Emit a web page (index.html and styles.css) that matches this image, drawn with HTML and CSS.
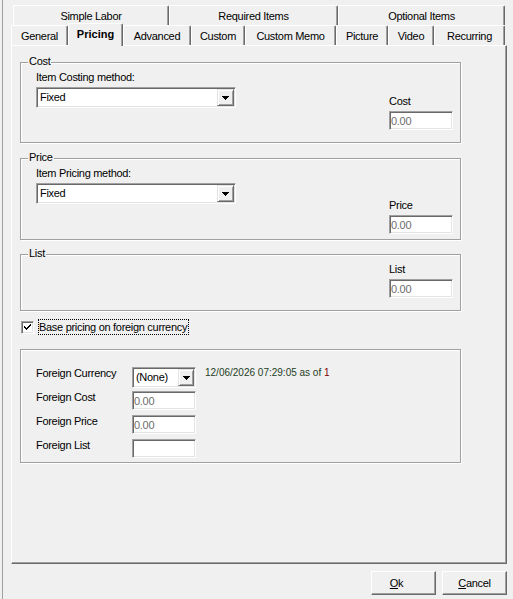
FILE: index.html
```html
<!DOCTYPE html>
<html lang="en">

<head>
    <meta charset="UTF-8">
    <meta name="viewport" content="width=device-width, initial-scale=1.0">
    <title>Item Pricing</title>
    <link rel="stylesheet" href="styles.css">
</head>

<body>
    <div class="window">
        <div class="tabs">
            <div class="tab-row back">
                <div class="tab t-labor">Simple Labor</div>
                <div class="tab t-required">Required Items</div>
                <div class="tab t-optional">Optional Items</div>
            </div>
            <div class="tab-row front">
                <div class="tab t-general">General</div>
                <div class="tab t-pricing active">Pricing</div>
                <div class="tab t-advanced">Advanced</div>
                <div class="tab t-custom">Custom</div>
                <div class="tab t-memo">Custom Memo</div>
                <div class="tab t-picture">Picture</div>
                <div class="tab t-video">Video</div>
                <div class="tab t-recurring">Recurring</div>
            </div>
        </div>

        <div class="panel">
            <div class="group cost">
                <span class="legend">Cost</span>
                <div class="cols">
                    <div class="method">
                        <label>Item Costing method:</label>
                        <div class="combo wide">
                            <span class="combo-text">Fixed</span>
                            <span class="drop"><svg width="7" height="4" viewBox="0 0 7 4"><path d="M0 0h7v1H0zM1 1h5v1H1zM2 2h3v1H2zM3 3h1v1H3z" fill="#000"/></svg></span>
                        </div>
                    </div>
                    <div class="side">
                        <label for="cost">Cost</label>
                        <input type="text" id="cost" class="field" value="0.00" readonly>
                    </div>
                </div>
            </div>

            <div class="group price">
                <span class="legend">Price</span>
                <div class="cols">
                    <div class="method">
                        <label>Item Pricing method:</label>
                        <div class="combo wide">
                            <span class="combo-text">Fixed</span>
                            <span class="drop"><svg width="7" height="4" viewBox="0 0 7 4"><path d="M0 0h7v1H0zM1 1h5v1H1zM2 2h3v1H2zM3 3h1v1H3z" fill="#000"/></svg></span>
                        </div>
                    </div>
                    <div class="side">
                        <label for="price">Price</label>
                        <input type="text" id="price" class="field" value="0.00" readonly>
                    </div>
                </div>
            </div>

            <div class="group list">
                <span class="legend">List</span>
                <div class="cols">
                    <div class="side">
                        <label for="list">List</label>
                        <input type="text" id="list" class="field" value="0.00" readonly>
                    </div>
                </div>
            </div>

            <div class="check-row">
                <span class="checkbox"><svg width="9" height="9" viewBox="0 0 9 9"><path d="M1 3h1v1h1v1h1V4h1V3h1V2h1V1h1v2H7v1H6v1H5v1H4v1H3V6H2V5H1z" fill="#000"/></svg></span>
                <span class="check-label">Base pricing on foreign currency</span>
            </div>

            <div class="group foreign">
                <div class="foreign-grid">
                    <span>Foreign Currency</span>
                    <div class="combo small">
                        <span class="combo-text">(None)</span>
                        <span class="drop"><svg width="7" height="4" viewBox="0 0 7 4"><path d="M0 0h7v1H0zM1 1h5v1H1zM2 2h3v1H2zM3 3h1v1H3z" fill="#000"/></svg></span>
                    </div>
                    <span class="rate">12/06/2026 07:29:05 as of <span class="rate-num">1</span></span>

                    <span>Foreign Cost</span>
                    <input type="text" class="field" value="0.00" readonly>
                    <span></span>

                    <span>Foreign Price</span>
                    <input type="text" class="field" value="0.00" readonly>
                    <span></span>

                    <span>Foreign List</span>
                    <input type="text" class="field" value="">
                    <span></span>
                </div>
            </div>
        </div>

        <div class="buttons">
            <button type="button" class="btn ok"><u>O</u>k</button>
            <button type="button" class="btn"><u>C</u>ancel</button>
        </div>
    </div>
</body>

</html>
```

FILE: styles.css
```css
* {
    box-sizing: border-box;
}

body {
    margin: 0;
    padding-left: 2px;
    background: #f0f0f0;
    font-family: "Liberation Sans", Arial, sans-serif;
    font-size: 11px;
    line-height: 13px;
    letter-spacing: -0.3px;
    color: #000;
    overflow: hidden;
}

.window {
    width: 511px;
    height: 599px;
    border-left: 1px solid #a0a0a0;
}

/* tabs */
.tabs {
    margin-left: 8px;
    padding-top: 5px;
}

.tab-row {
    display: flex;
    height: 20px;
}

.back {
    padding-left: 2px;
}

.tab {
    height: 20px;
    padding-top: 4px;
    border-top: 1px solid #fff;
    border-left: 1px solid #fff;
    border-right: 1px solid #696969;
    box-shadow: inset -1px 0 #a0a0a0;
    border-radius: 2px 2px 0 0;
    text-align: center;
    white-space: nowrap;
}

.t-labor { width: 156px; }
.t-required { width: 169px; }
.t-optional { width: 167px; }
.t-general { width: 57px; }
.t-pricing { width: 55px; }
.t-advanced { width: 68px; }
.t-custom { width: 54px; }
.t-memo { width: 91px; }
.t-picture { width: 52px; }
.t-video { width: 46px; }
.t-recurring { width: 71px; }

.tab.active {
    position: relative;
    z-index: 1;
    height: 23px;
    margin-top: -2px;
    background: #f0f0f0;
    font-weight: bold;
    letter-spacing: 0;
}

/* panel */
.panel {
    margin-left: 8px;
    width: 496px;
    height: 519px;
    padding: 0 0 0 8px;
    border-top: 1px solid #fff;
    border-left: 1px solid #fff;
    border-right: 1px solid #696969;
    border-bottom: 1px solid #696969;
    box-shadow: inset -1px -1px #a0a0a0;
}

.group {
    width: 441px;
    padding: 0 7px 0 15px;
    border: 1px solid #a0a0a0;
    box-shadow: inset 1px 1px #fff, 1px 1px #fff;
}

.legend {
    display: block;
    width: fit-content;
    margin: -8px 0 0 -8px;
    padding: 0 1px;
    background: #f0f0f0;
}

.cols {
    display: flex;
    justify-content: space-between;
    padding-top: 3px;
}

.cost {
    margin-top: 16px;
}

.cost .cols {
    padding-bottom: 12px;
}

.cost .side {
    margin-top: 24px;
}

.price {
    margin-top: 15px;
}

.price .cols {
    padding-bottom: 5px;
}

.price .side {
    margin-top: 32px;
}

.list {
    margin-top: 14px;
}

.list .cols {
    justify-content: flex-end;
    padding-bottom: 12px;
}

label {
    display: block;
}

.method .combo,
.side .field {
    margin-top: 3px;
}

/* controls */
.combo {
    display: flex;
    align-items: center;
    justify-content: space-between;
    height: 21px;
    padding: 1px 1px 1px 3px;
    background: #fff;
    border: 1px solid;
    border-color: #a0a0a0 #fff #fff #a0a0a0;
    box-shadow: inset 1px 1px #696969, inset -1px -1px #e3e3e3;
}

.combo.wide {
    width: 200px;
}

.combo.small {
    width: 64px;
}

.drop {
    display: flex;
    align-items: center;
    justify-content: center;
    width: 17px;
    height: 17px;
    background: #f0f0f0;
    border: 1px solid;
    border-color: #e3e3e3 #696969 #696969 #e3e3e3;
    box-shadow: inset 1px 1px #fff, inset -1px -1px #a0a0a0;
}

.small .drop {
    width: 16px;
}

.field {
    display: block;
    width: 64px;
    height: 19px;
    margin: 0;
    padding: 0 0 0 1px;
    font: inherit;
    letter-spacing: inherit;
    color: #6d6d6d;
    background: #fff;
    border: 1px solid;
    border-color: #a0a0a0 #fff #fff #a0a0a0;
    box-shadow: inset 1px 1px #696969, inset -1px -1px #e3e3e3;
    outline: none;
}

/* checkbox */
.check-row {
    display: flex;
    align-items: center;
    height: 16px;
    margin: 8px 0 0 1px;
}

.checkbox {
    display: flex;
    align-items: center;
    justify-content: center;
    width: 13px;
    height: 13px;
    margin-right: 4px;
    background: #fff;
    border: 1px solid;
    border-color: #a0a0a0 #fff #fff #a0a0a0;
    box-shadow: inset 1px 1px #696969, inset -1px -1px #e3e3e3;
}

.check-label {
    height: 16px;
    padding: 0 1px 0 0;
    line-height: 14px;
    border: 1px dotted #000;
}

/* foreign currency */
.foreign {
    margin-top: 14px;
    padding-top: 17px;
    padding-bottom: 4px;
}

.foreign-grid {
    display: grid;
    grid-template-columns: 96px 64px auto;
    grid-template-rows: 24px 24px 24px 19px;
    align-items: start;
}

.rate {
    margin-left: 9px;
    font-size: 10px;
    line-height: 12px;
    letter-spacing: 0;
    color: #1e3d1e;
}

.rate-num {
    color: #800000;
}

/* buttons */
.buttons {
    display: flex;
    justify-content: flex-end;
    gap: 6px;
    margin-top: 7px;
    padding-right: 6px;
}

.btn {
    width: 65px;
    height: 24px;
    padding: 0;
    font: inherit;
    letter-spacing: inherit;
    color: #000;
    background: #f0f0f0;
    border: 1px solid;
    border-color: #fff #696969 #696969 #fff;
    box-shadow: inset -1px -1px #a0a0a0;
}

.btn.ok {
    padding-right: 14px;
}
```
